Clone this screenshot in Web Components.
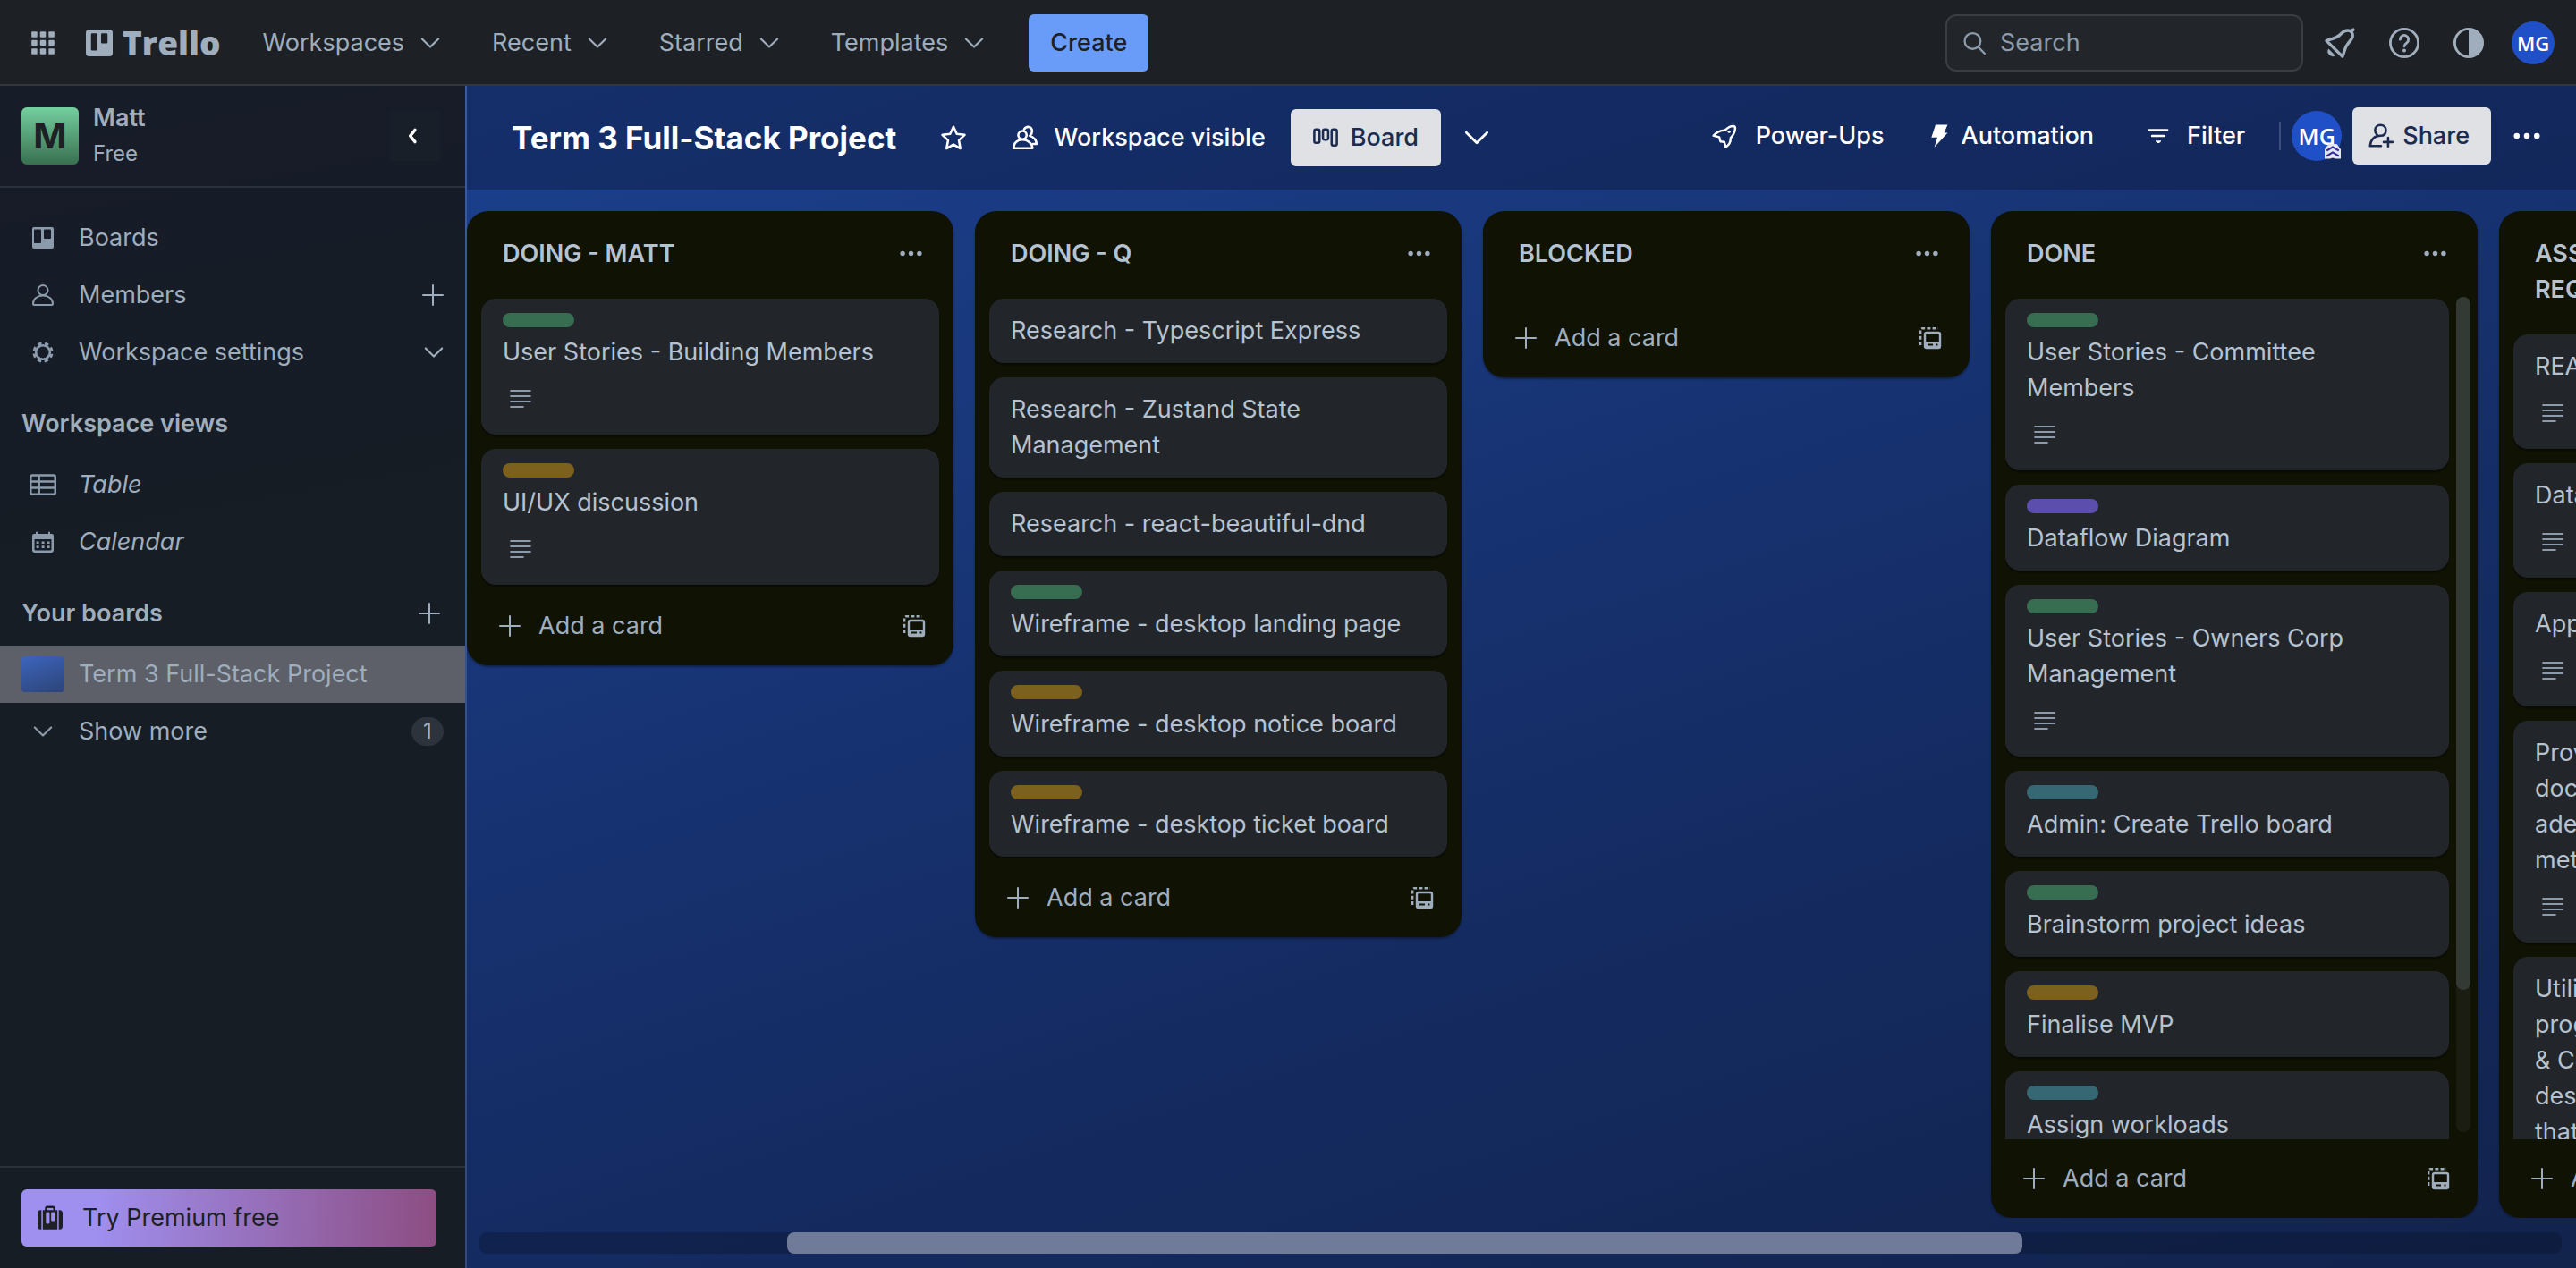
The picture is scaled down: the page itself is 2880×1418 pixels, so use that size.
<!DOCTYPE html>
<html lang="en">
<head>
<meta charset="utf-8">
<title>Term 3 Full-Stack Project | Trello</title>
<style>
  html, body { height: 100%; }
  body {
    margin: 0;
    overflow: hidden;
    font-family: Inter, "Liberation Sans", sans-serif;
    font-size: 27px;
    line-height: 40px;
    color: #9fadbc;
    background: #1d2125;
  }
</style>
</head>
<body>
<trello-app>
  <top-bar slot="top">
    <nav-menu>Workspaces</nav-menu>
    <nav-menu>Recent</nav-menu>
    <nav-menu>Starred</nav-menu>
    <nav-menu>Templates</nav-menu>
  </top-bar>

  <workspace-sidebar slot="side">
    <side-item icon="boards">Boards</side-item>
    <side-item icon="member" action="plus">Members</side-item>
    <side-item icon="gear" action="chevron">Workspace settings</side-item>
    <side-heading>Workspace views</side-heading>
    <side-item icon="table" italic>Table</side-item>
    <side-item icon="calendar" italic>Calendar</side-item>
    <side-heading action="plus">Your boards</side-heading>
    <side-item board current>Term 3 Full-Stack Project</side-item>
    <side-item icon="chevron" count="1">Show more</side-item>
  </workspace-sidebar>

  <board-header slot="header">Term 3 Full-Stack Project</board-header>

  <board-list name="DOING - MATT">
    <board-card label="green" description>User Stories - Building Members</board-card>
    <board-card label="yellow" description>UI/UX discussion</board-card>
  </board-list>
  <board-list name="DOING - Q">
    <board-card>Research - Typescript Express</board-card>
    <board-card>Research - Zustand State Management</board-card>
    <board-card>Research - react-beautiful-dnd</board-card>
    <board-card label="green">Wireframe - desktop landing page</board-card>
    <board-card label="yellow">Wireframe - desktop notice board</board-card>
    <board-card label="yellow">Wireframe - desktop ticket board</board-card>
  </board-list>
  <board-list name="BLOCKED"></board-list>
  <board-list name="DONE" scroll>
    <board-card label="green" description>User Stories - Committee Members</board-card>
    <board-card label="purple">Dataflow Diagram</board-card>
    <board-card label="green" description>User Stories - Owners Corp Management</board-card>
    <board-card label="sky">Admin: Create Trello board</board-card>
    <board-card label="green">Brainstorm project ideas</board-card>
    <board-card label="yellow">Finalise MVP</board-card>
    <board-card label="sky">Assign workloads</board-card>
  </board-list>
  <board-list name="ASSESSMENT TASK REQUIREMENTS" scroll>
    <board-card description>README</board-card>
    <board-card description>Dataflow Diagram</board-card>
    <board-card description>App Architecture</board-card>
    <board-card description>Provides project<br>documentation with<br>adequate planning<br>methods</board-card>
    <board-card description>Utilises a range of<br>programming tools<br>&amp; Code that is<br>designed for work<br>that is shared</board-card>
  </board-list>
</trello-app>

<script>
const ICONS = {
  apps: '<g fill="currentColor"><rect x="1" y="1" width="5.6" height="5.6" rx="1"/><rect x="9.2" y="1" width="5.6" height="5.6" rx="1"/><rect x="17.4" y="1" width="5.6" height="5.6" rx="1"/><rect x="1" y="9.2" width="5.6" height="5.6" rx="1"/><rect x="9.2" y="9.2" width="5.6" height="5.6" rx="1"/><rect x="17.4" y="9.2" width="5.6" height="5.6" rx="1"/><rect x="1" y="17.4" width="5.6" height="5.6" rx="1"/><rect x="9.2" y="17.4" width="5.6" height="5.6" rx="1"/><rect x="17.4" y="17.4" width="5.6" height="5.6" rx="1"/></g>',
  logo: '<path fill="currentColor" fill-rule="evenodd" d="M3 0h18a3 3 0 0 1 3 3v18a3 3 0 0 1-3 3H3a3 3 0 0 1-3-3V3a3 3 0 0 1 3-3Zm1.600 4.400v13.400a1 1 0 0 0 1 1H9.400a1 1 0 0 0 1-1V4.400a1 1 0 0 0-1-1H5.600a1 1 0 0 0-1 1Zm9 0v7a1 1 0 0 0 1 1h3.800a1 1 0 0 0 1-1v-7a1 1 0 0 0-1-1h-3.800a1 1 0 0 0-1 1Z"/>',
  boards: '<path fill="currentColor" fill-rule="evenodd" d="M2 0h20a2 2 0 0 1 2 2v20a2 2 0 0 1-2 2H2a2 2 0 0 1-2-2V2a2 2 0 0 1 2-2Zm1 2.500a1 1 0 0 0-1 1V17a1 1 0 0 0 1 1h6a1 1 0 0 0 1-1V3.500a1 1 0 0 0-1-1H3Zm11 0a1 1 0 0 0-1 1V12a1 1 0 0 0 1 1h6a1 1 0 0 0 1-1V3.500a1 1 0 0 0-1-1h-6Z"/>',
  member: '<g fill="none" stroke="currentColor" stroke-width="2"><circle cx="12" cy="6.500" r="5.500"/><path d="M1 21.500C1 16 6 12.600 12 12.600S23 16 23 21.500q0 1.500-1.500 1.500h-19Q1 23 1 21.500Z"/></g>',
  gear: '<circle cx="12" cy="12" r="7.800" fill="none" stroke="currentColor" stroke-width="2.600"/><circle cx="12" cy="12" r="10" fill="none" stroke="currentColor" stroke-width="3.200" stroke-dasharray="4.200 3.654" stroke-dashoffset="-1.800"/>',
  table: '<g fill="none" stroke="currentColor" stroke-width="2"><rect x="1" y="3.500" width="22" height="17" rx="1.600"/><path d="M1 9.200h22M1 14.800h22M8.500 3.500v17"/></g>',
  calendar: '<path fill="currentColor" fill-rule="evenodd" d="M4 1.500a1 1 0 0 1 2 0V3h12V1.500a1 1 0 0 1 2 0V3h2a2 2 0 0 1 2 2v16a3 3 0 0 1-3 3H3a3 3 0 0 1-3-3V5a2 2 0 0 1 2-2h2V1.500ZM2.500 9v11.500a1 1 0 0 0 1 1h17a1 1 0 0 0 1-1V9h-19Z"/><path stroke="currentColor" stroke-width="2.600" stroke-dasharray="3 3" d="M4.600 12.800h15M4.600 17.600h15"/>',
  chevron: '<path d="m2 7 10 10L22 7" fill="none" stroke="currentColor" stroke-width="2.400" stroke-linecap="round" stroke-linejoin="round"/>',
  back: '<path d="M12 4 5.500 12l6.500 8" fill="none" stroke="currentColor" stroke-width="4" stroke-linecap="round" stroke-linejoin="round"/>',
  plus: '<path d="M12 1v22M1 12h22" stroke="currentColor" stroke-width="2" stroke-linecap="round"/>',
  search: '<g fill="none" stroke="currentColor" stroke-width="2.200" stroke-linecap="round"><circle cx="10" cy="9.500" r="8.500"/><path d="m16 16 7 7"/></g>',
  bell: '<g fill="none" stroke="currentColor" stroke-width="2.400" stroke-linejoin="round" stroke-linecap="round"><path d="M1.400 10.300 14 22.700c2-4 1.200-6.700 4.600-10.500 4-4.500 4.300-6.200 2.600-9-2.600-2-5.200-1.600-9.200 2.400-3.300 3.200-6.600 2.800-10.600 4.700Z"/><path d="m20.800 3 1.700-1.500"/></g><path fill="currentColor" d="M3 16.500 8.500 22a4 4 0 0 1-5.500-5.500Z"/>',
  help: '<g fill="none" stroke="currentColor" stroke-width="2"><circle cx="12" cy="12" r="11"/><path stroke-linecap="round" d="M8.700 9.300a3.300 3.300 0 1 1 5.300 2.600c-1.200.9-2 1.500-2 2.800"/></g><circle cx="12" cy="18" r="1.400" fill="currentColor"/>',
  contrast: '<circle cx="12" cy="12" r="11" fill="none" stroke="currentColor" stroke-width="2"/><path fill="currentColor" d="M12 1a11 11 0 0 1 0 22Z"/>',
  star: '<path d="m12 1.500 3.200 6.900 7.500.9-5.500 5.200 1.400 7.800L12 18.500l-6.600 3.800 1.400-7.800L1.300 9.300l7.500-.9Z" fill="none" stroke="currentColor" stroke-width="2.200" stroke-linejoin="round"/>',
  people: '<g fill="none" stroke="currentColor" stroke-width="2.200" stroke-linejoin="round" stroke-linecap="round"><circle cx="9.500" cy="9.500" r="4"/><path d="M1 22c0-4.800 3.600-8 8.500-8s9.500 3.200 9.500 8Z"/><path d="M11 4.200C12 2.400 13 1.600 14.800 1.600c2.700 0 4 2 4 4.200 0 2-1 3.300-2.300 4.400 3.600 1.200 6.300 3.800 6.500 7.800h-3.500"/></g>',
  board: '<g fill="none" stroke="currentColor" stroke-width="2.200"><rect x="1.200" y="4" width="5" height="13" rx="1.500"/><rect x="9.500" y="4" width="5" height="10" rx="1.500"/><rect x="17.800" y="4" width="5" height="15.500" rx="1.500"/></g>',
  rocket: '<g fill="none" stroke="currentColor" stroke-width="2.200" stroke-linejoin="round"><path d="M1.500 11.400C4.500 7.500 8 6 12.800 6 16 3 19 1.400 21.500 1.800c1.500.3 1.700 1.500 1.500 3-.4 3.500-2 6.200-4.500 8.900.2 3.700-1.400 6.800-4.800 9.100l-1.500-5.300-3.800-.4-1.200-4.300Z"/></g><circle cx="17" cy="7.300" r="1.400" fill="currentColor"/>',
  bolt: '<path fill="currentColor" d="M8.300.500h12.400l-3.500 8.200h3.600L7 23.700l3.200-10H4Z"/>',
  filter: '<path fill="none" stroke="currentColor" stroke-width="2.400" stroke-linecap="round" d="M1.800 5.500h20.400M5 12h14"/><path fill="currentColor" d="M9 17.300h6v1L13 20h-2l-2-1.700Z"/>',
  invite: '<g fill="none" stroke="currentColor" stroke-width="2.200" stroke-linecap="round" stroke-linejoin="round"><path d="M8.200 10.800C6.900 9.700 6.300 8.400 6.300 6.600c0-3 2.200-5.100 5.200-5.100s5.200 2.100 5.200 5.100c0 3.400-2 5.200-5.200 5.200-5.600 0-9.200 3.200-10 9.900h10.500M18.800 13.700v8.400M14.600 17.900h8.400"/></g>',
  dots: '<g fill="currentColor"><circle cx="3" cy="12" r="2.600"/><circle cx="12" cy="12" r="2.600"/><circle cx="21" cy="12" r="2.600"/></g>',
  lines: '<path stroke="currentColor" stroke-width="2.200" stroke-linecap="round" d="M1.200 3h21.600M1.200 9h21.600M1.200 15h21.600M1.200 21h13.600"/>',
  template: '<g fill="none" stroke="currentColor" stroke-width="2.400"><rect x="6" y="6" width="17" height="17" rx="2"/><path stroke-dasharray="4 2.200" d="M1.200 20V3.200q0-2 2-2H21"/></g><path fill="currentColor" fill-rule="evenodd" d="M5.500 16h18v6a1.500 1.500 0 0 1-1.500 1.500H7A1.500 1.500 0 0 1 5.500 22Zm3.500 2.600v1.800h6v-1.800Zm9.500 0v1.800h2v-1.800Z"/>',
  suitcase: '<path fill="currentColor" fill-rule="evenodd" d="M7 4.500V3a2.500 2.500 0 0 1 2.500-2.500h5A2.500 2.500 0 0 1 17 3v1.500h2V23H5V4.500h2Zm2 0h6V3.300a.8.800 0 0 0-.8-.8H9.800a.8.800 0 0 0-.8.800v1.200ZM8 7.500v9a1 1 0 0 0 1 1h1.500a1 1 0 0 0 1-1v-9a1 1 0 0 0-1-1H9a1 1 0 0 0-1 1Zm5 0V14a1 1 0 0 0 1 1h1.500a1 1 0 0 0 1-1V7.500a1 1 0 0 0-1-1H14a1 1 0 0 0-1 1Z"/><path fill="currentColor" d="M3.700 4.500V23H3a3 3 0 0 1-3-3V7.500a3 3 0 0 1 3-3ZM20.300 4.500V23h.7a3 3 0 0 0 3-3V7.500a3 3 0 0 0-3-3Z"/>',
  admin: '<path fill="#e4e6f3" d="M0 8 6 0h12l6 8v14h-8l-4-1.500L8 22H0Z"/><path d="m3 10 9-5.500 9 5.500M3 18l9-5.500 9 5.500" fill="none" stroke="#352c9a" stroke-width="2.800"/>'
};

const BASE = `
  *, *::before, *::after { box-sizing: border-box; }
  button, input { font: inherit; color: inherit; border: 0; background: none; padding: 0; margin: 0; }
  a { color: inherit; text-decoration: none; }
  h1, h2, p, ul { margin: 0; padding: 0; font: inherit; }
`;

function define(name, render) {
  customElements.define(name, class extends HTMLElement {
    constructor() {
      super();
      this.attachShadow({ mode: 'open' });
    }
    connectedCallback() {
      if (!this.shadowRoot.firstChild) {
        const t = document.createElement('template');
        t.innerHTML = render(this);
        this.shadowRoot.append(t.content.cloneNode(true));
      }
    }
  });
}

define('t-icon', el => {
  const size = el.getAttribute('size') || 28;
  return `<style>:host { display: block; flex: none; width: ${size}px; height: ${size}px; } svg { display: block; overflow: visible; }</style>
    <svg viewBox="0 0 24 24" width="${size}" height="${size}" aria-hidden="true">${ICONS[el.getAttribute('name')]}</svg>`;
});

define('trello-app', () => `<style>${BASE}
  :host { display: flex; flex-direction: column; height: 100vh; }
  .body { flex: 1; min-height: 0; display: flex; background: linear-gradient(162deg, #1d4394 0%, #152d66 60%, #12234c 100%); }
  main { flex: 1; min-width: 0; display: flex; flex-direction: column; border-left: 2px solid rgba(255,255,255,.14); }
  .lists { flex: 1; min-height: 0; display: flex; align-items: flex-start; gap: 24px; padding-top: 24px; overflow: hidden; }
  .track { height: 24px; margin: 16px 16px 16px 14px; border-radius: 8px; background: rgba(9,16,40,.35); padding-left: 14.600%; }
  .thumb { width: 69.600%; height: 24px; border-radius: 8px; background: #6f7b98; }
</style>
<slot name="top"></slot>
<div class="body">
  <slot name="side"></slot>
  <main>
    <slot name="header"></slot>
    <div class="lists"><slot></slot></div>
    <div class="track"><div class="thumb"></div></div>
  </main>
</div>`);

define('top-bar', () => `<style>${BASE}
  :host { display: block; }
  header { height: 96px; padding: 2px 24px 0 34px; display: flex; align-items: center; border-bottom: 2px solid #34373a; background: #1d2125; }
  .logo { display: flex; align-items: center; gap: 11px; margin: 0 47px 0 34px; font: 800 37px/48px "Open Sans", sans-serif; }
  nav { display: flex; align-items: center; gap: 58px; }
  .create { height: 64px; padding: 0 24px; margin-left: 50px; border-radius: 6px; background: #699cf9; color: #1d2125; font-weight: 500; }
  .search { display: flex; align-items: center; gap: 16px; width: 400px; height: 64px; margin-left: auto; padding: 0 18px; border: 2px solid #383e44; border-radius: 12px; background: #22262a; color: #8c9bab; }
  input { width: 100%; outline: 0; }
  input::placeholder { color: #8c9bab; opacity: 1; }
  .tools { display: flex; align-items: center; gap: 38px; margin: 0 31px 0 24px; }
  button { display: block; }
</style>
<header>
  <button aria-label="More apps"><t-icon name="apps" size="28"></t-icon></button>
  <a class="logo" href="#"><t-icon name="logo" size="30"></t-icon>Trello</a>
  <nav><slot></slot></nav>
  <button class="create">Create</button>
  <label class="search"><t-icon name="search" size="25"></t-icon><input type="text" aria-label="Search" placeholder="Search"></label>
  <div class="tools">
    <button aria-label="Notifications"><t-icon name="bell" size="34"></t-icon></button>
    <button aria-label="Help"><t-icon name="help" size="34"></t-icon></button>
    <button aria-label="Theme"><t-icon name="contrast" size="34"></t-icon></button>
  </div>
  <user-avatar size="48">MG</user-avatar>
</header>`);

define('nav-menu', () => `<style>${BASE}
  :host { display: block; }
  button { display: flex; align-items: center; gap: 18px; }
</style><button><slot></slot><t-icon name="chevron" size="22"></t-icon></button>`);

define('user-avatar', el => {
  const s = +el.getAttribute('size');
  return `<style>${BASE}
  :host { display: block; flex: none; }
  button { position: relative; display: block; width: ${s}px; height: ${s}px; border-radius: 50%; background: #2050c8; color: #fff; font: 600 ${s > 50 ? 25 : 22}px/${s}px "Open Sans", sans-serif; text-align: center; }
  t-icon { position: absolute; right: 1px; bottom: 1px; }
</style><button><slot></slot>${el.hasAttribute('admin') ? '<t-icon name="admin" size="18"></t-icon>' : ''}</button>`;
});

define('workspace-sidebar', () => `<style>${BASE}
  :host { display: flex; flex: none; flex-direction: column; width: 520px; background: linear-gradient(170deg, #171c29, #161d24 45%); }
  .top { display: flex; align-items: center; height: 114px; padding: 0 28px 0 24px; border-bottom: 2px solid #2b313b; }
  .mark { width: 64px; height: 64px; border-radius: 6px; background: linear-gradient(#74cf9f, #38704f); color: #1d2125; font-weight: 700; font-size: 40px; line-height: 64px; text-align: center; }
  .who { flex: 1; padding-left: 16px; }
  .name { font-weight: 600; }
  .plan { font-size: 24px; }
  .collapse { display: grid; place-items: center; width: 56px; height: 56px; background: #191f29; color: #fff; }
  nav { flex: 1; padding-top: 24px; }
  .bottom { padding: 24px 32px 24px 24px; border-top: 2px solid #2b313b; }
  .premium { display: flex; align-items: center; gap: 22px; width: 100%; height: 64px; padding: 0 18px; border-radius: 6px; color: #1d2125; background: linear-gradient(92deg, #9f8fef 18%, #8d4d82); }
</style>
<div class="top">
  <div class="mark">M</div>
  <div class="who"><p class="name">Matt</p><p class="plan">Free</p></div>
  <button class="collapse" aria-label="Collapse sidebar"><t-icon name="back" size="20"></t-icon></button>
</div>
<nav><slot></slot></nav>
<div class="bottom"><button class="premium"><t-icon name="suitcase" size="28"></t-icon>Try Premium free</button></div>`);

define('side-heading', el => `<style>${BASE}
  :host { display: flex; align-items: center; justify-content: space-between; height: 72px; margin-top: 12px; padding: 0 28px 0 24px; }
  h2 { font-weight: 600; }
  button { display: block; }
</style><h2><slot></slot></h2>${el.hasAttribute('action') ? '<button aria-label="Add"><t-icon name="plus" size="24"></t-icon></button>' : ''}`);

define('side-item', el => {
  const icon = el.getAttribute('icon'), action = el.getAttribute('action'), count = el.getAttribute('count');
  const size = icon === 'table' ? 30 : icon === 'chevron' ? 22 : 24;
  return `<style>${BASE}
  :host { display: flex; align-items: center; height: 64px; padding: 0 24px; }
  :host([current]) { background: #5d6068; }
  :host([italic]) a { font-style: italic; }
  a { flex: 1; display: flex; align-items: center; gap: 16px; }
  .icon { width: 48px; display: grid; place-items: center; color: #8c9bab; }
  .thumb { width: 48px; height: 40px; border-radius: 4px; background: linear-gradient(160deg, #3d65bd, #2c4377); }
  button { display: block; }
  .count { width: 36px; height: 32px; border-radius: 16px; background: #2c333d; font-size: 24px; line-height: 32px; text-align: center; }
</style>
<a href="#">${el.hasAttribute('board') ? '<span class="thumb"></span>' : `<span class="icon"><t-icon name="${icon}" size="${size}"></t-icon></span>`}<slot></slot></a>
${action ? `<button aria-label="Open"><t-icon name="${action}" size="${action === 'chevron' ? 22 : 24}"></t-icon></button>` : ''}${count ? `<span class="count">${count}</span>` : ''}`;
});

define('board-header', () => `<style>${BASE}
  :host { display: flex; align-items: center; justify-content: space-between; height: 116px; padding: 0 40px 0 50px; background: rgba(14,26,64,.45); color: #fff; font-weight: 500; }
  .group { display: flex; align-items: center; }
  .actions { padding-bottom: 4px; }
  button { display: flex; align-items: center; }
  h1 { font-weight: 700; font-size: 35px; line-height: 48px; }
  .star { margin: 0 52px 0 50px; }
  .visible { gap: 18px; }
  .light { height: 64px; border-radius: 6px; background: #dfe1e5; color: #1c2b50; }
  .view { gap: 14px; padding: 0 25px; margin: 0 26px 0 28px; }
  .power { gap: 22px; margin-right: 48px; }
  .auto { gap: 12px; margin-right: 60px; }
  .filter { gap: 20px; }
  .rule { width: 2px; height: 32px; margin: 0 12px 0 38px; background: rgba(255,255,255,.18); }
  .share { gap: 10px; padding: 0 24px 0 18px; margin: 0 25px 0 12px; }
</style>
<div class="group">
  <h1><slot></slot></h1>
  <button class="star" aria-label="Star board"><t-icon name="star" size="28"></t-icon></button>
  <button class="visible"><t-icon name="people" size="28"></t-icon>Workspace visible</button>
  <button class="light view"><t-icon name="board" size="28"></t-icon>Board</button>
  <button aria-label="Views"><t-icon name="chevron" size="28"></t-icon></button>
</div>
<div class="group actions">
  <button class="power"><t-icon name="rocket" size="27"></t-icon>Power-Ups</button>
  <button class="auto"><t-icon name="bolt" size="26"></t-icon>Automation</button>
  <button class="filter"><t-icon name="filter" size="24"></t-icon>Filter</button>
  <span class="rule"></span>
  <user-avatar size="56" admin>MG</user-avatar>
  <button class="light share"><t-icon name="invite" size="28"></t-icon>Share</button>
  <button aria-label="Show menu"><t-icon name="dots" size="30"></t-icon></button>
</div>`);

define('board-list', el => `<style>${BASE}
  :host { display: flex; flex: none; flex-direction: column; width: 544px; max-height: 100%; border-radius: 24px; background: #101204; color: #b6c2cf; box-shadow: 0 2px 2px rgba(9,16,30,.5); }
  header { display: flex; align-items: flex-start; gap: 24px; padding: 28px 35px 28px 40px; }
  h2 { flex: 1; font-weight: 600; }
  header button { padding-top: 7px; color: #9fadbc; }
  .scroller { flex: 0 1 auto; min-height: 0; display: flex; gap: 8px; padding: 0 16px; }
  :host([scroll]) .scroller { padding-right: 8px; }
  .cards { flex: 1; min-width: 0; padding-top: 2px; display: flex; flex-direction: column; gap: 16px; overflow: hidden; }
  ::slotted(:last-child) { margin-bottom: 2px; }
  .bar { flex: none; width: 16px; margin-bottom: 8px; border-radius: 8px; background: #1b1d13; }
  .thumb { height: 83%; border-radius: 8px; background: #323a33; }
  footer { flex: none; display: flex; align-items: center; justify-content: space-between; height: 88px; padding: 0 32px 0 36px; color: #9fadbc; }
  footer button { display: flex; align-items: center; gap: 20px; }
</style>
<header><h2>${el.getAttribute('name')}</h2><button aria-label="List actions"><t-icon name="dots" size="25"></t-icon></button></header>
<div class="scroller"><div class="cards"><slot></slot></div>${el.hasAttribute('scroll') ? '<div class="bar"><div class="thumb"></div></div>' : ''}</div>
<footer><button><t-icon name="plus" size="24"></t-icon>Add a card</button><button aria-label="Create from template"><t-icon name="template" size="24"></t-icon></button></footer>`);

define('board-card', el => `<style>${BASE}
  :host { display: block; flex: none; padding: 16px 24px; border-radius: 16px; background: #22262b; box-shadow: 0 2px 2px rgba(0,0,0,.45); }
  .label { width: 80px; height: 16px; margin-bottom: 8px; border-radius: 8px; }
  .green { background: #376d50; } .yellow { background: #7c601d; }
  .purple { background: #5c4eac; } .sky { background: #366873; }
  .badge { display: flex; align-items: center; height: 48px; margin-top: 8px; padding-left: 8px; color: #8c9bab; }
</style>
${el.hasAttribute('label') ? `<div class="label ${el.getAttribute('label')}"></div>` : ''}
<p><slot></slot></p>
${el.hasAttribute('description') ? '<div class="badge"><t-icon name="lines" size="24"></t-icon></div>' : ''}`);
</script>
</body>
</html>
